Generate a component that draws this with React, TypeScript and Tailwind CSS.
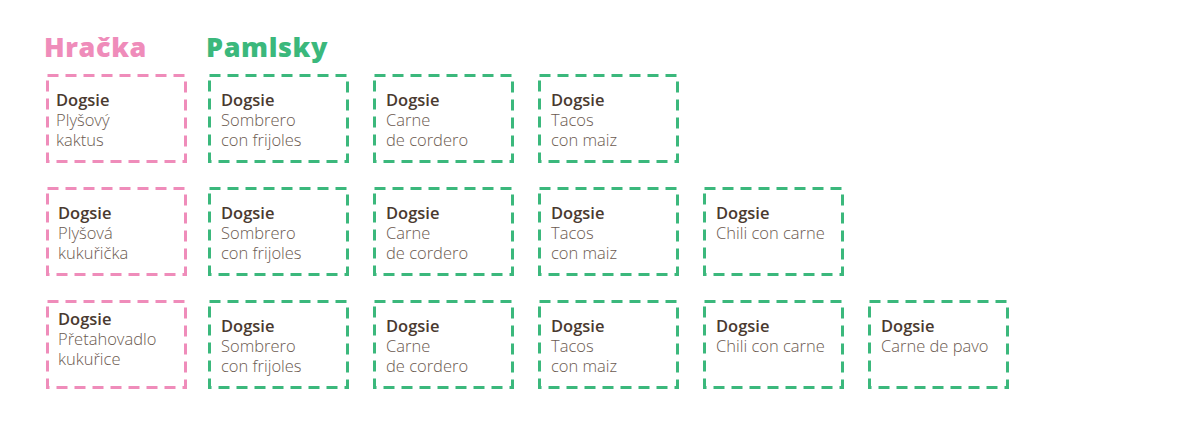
const rows: { toy: string[]; toyClass: string; treats: string[][] }[] = [
  {
    toy: ['Plyšový', 'kaktus'],
    toyClass: 'pl-[10px] pt-[16px]',
    treats: [
      ['Sombrero', 'con frijoles'],
      ['Carne', 'de cordero'],
      ['Tacos', 'con maiz'],
    ],
  },
  {
    toy: ['Plyšová', 'kukuřička'],
    toyClass: 'pl-[12px] pt-[16px]',
    treats: [
      ['Sombrero', 'con frijoles'],
      ['Carne', 'de cordero'],
      ['Tacos', 'con maiz'],
      ['Chili con carne'],
    ],
  },
  {
    toy: ['Přetahovadlo', 'kukuřice'],
    toyClass: 'pl-[12px] pt-[9px]',
    treats: [
      ['Sombrero', 'con frijoles'],
      ['Carne', 'de cordero'],
      ['Tacos', 'con maiz'],
      ['Chili con carne'],
      ['Carne de pavo'],
    ],
  },
]

function Card({ lines, pink, className = 'pl-[13px] pt-[16px]' }: { lines: string[]; pink?: boolean; className?: string }) {
  return (
    <div className={`relative w-[141px] h-[89px] ${className} text-[16.5px] leading-[20px]`}>
      {/* dashed frame */}
      <svg className="absolute inset-0 pointer-events-none" width="141" height="89">
        <rect
          x="1.5"
          y="1.5"
          width="138"
          height="86"
          fill="none"
          stroke={pink ? '#ef8cba' : '#3bb87c'}
          strokeWidth="3"
          strokeDasharray="11 7"
        />
      </svg>
      <div className="font-semibold text-[#4a3a30]">Dogsie</div>
      {lines.map((l) => (
        <div key={l} className="font-light text-[#6b5a50]">
          {l}
        </div>
      ))}
    </div>
  )
}

export default function App() {
  return (
    <div className="w-[1200px] h-[431px] bg-white pl-[46px] pt-[30px]" style={{ fontFamily: '"Open Sans", "Liberation Sans", sans-serif' }}>
      {/* Headings */}
      <div className="flex items-end h-[34px] mb-[10px] font-extrabold text-[27px] leading-[34px] tracking-[0.6px]">
        <h2 className="w-[162px] -ml-[2px] text-[#ef8cba]">Hračka</h2>
        <h2 className="text-[#3bb87c]">Pamlsky</h2>
      </div>

      <div className="flex flex-col gap-[24px]">
        {rows.map((row, i) => (
          <div key={i} className="flex">
            <Card lines={row.toy} pink className={row.toyClass} />
            <div className="flex gap-[24px] ml-[21px]">
              {row.treats.map((t, j) => (
                <Card key={j} lines={t} />
              ))}
            </div>
          </div>
        ))}
      </div>
    </div>
  )
}
